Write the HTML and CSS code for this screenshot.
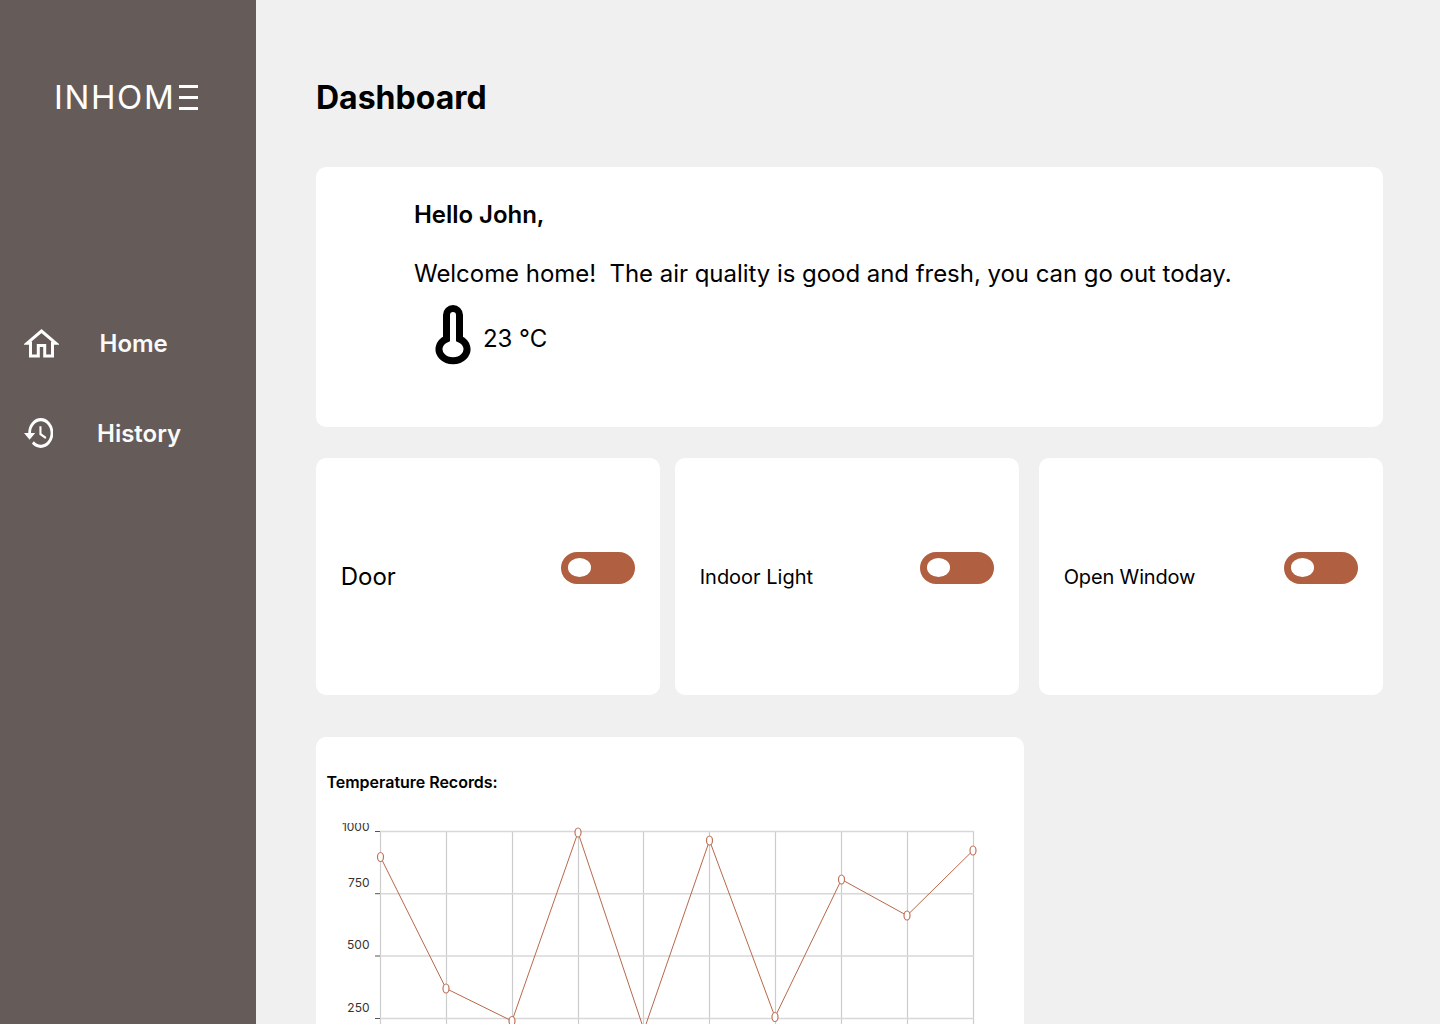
FILE: index.html
```html
<!DOCTYPE html>
<html lang="en">
<head>
<meta charset="utf-8">
<title>INHOME Dashboard</title>
<link rel="stylesheet" href="styles.css">
</head>
<body>
<div class="app">
  <aside class="sidebar">
    <div class="logo"><span class="logo-text">INHOM</span><span class="logo-e"><i></i><i></i><i></i></span></div>
    <nav class="nav">
      <a class="nav-item nav-home">
        <svg class="nav-icon-home" viewBox="24 327 35 29"><path d="M27 341.300 41.500 329 56 341.300H52.500V354H44.700V343.500H38.300V354H30.500V341.300Z" fill="none" stroke="#fff" stroke-width="3" stroke-linejoin="miter"/></svg>
        <span>Home</span>
      </a>
      <a class="nav-item nav-history">
        <svg class="nav-icon-history" viewBox="1 3 21 18" preserveAspectRatio="none"><path fill="#fff" d="M13 3a9 9 0 0 0-9 9H1l3.89 3.89.07.14L9 12H6c0-3.87 3.13-7 7-7s7 3.13 7 7-3.13 7-7 7c-1.93 0-3.68-.79-4.94-2.06l-1.42 1.42A8.954 8.954 0 0 0 13 21a9 9 0 0 0 0-18zm-1 5v5l4.28 2.54.72-1.21-3.5-2.08V8H12z"/></svg>
        <span>History</span>
      </a>
    </nav>
  </aside>
  <main class="main">
    <h1 class="title">Dashboard</h1>
    <section class="card hero">
      <p class="hello">Hello John,</p>
      <p class="welcome">Welcome home!&nbsp; The air quality is good and fresh, you can go out today.</p>
      <div class="temp">
        <svg class="thermo" viewBox="435 304 36 60"><path d="M446.500 338V314a6.500 6.500 0 0 1 13 0V338a14 11.500 0 1 1-13 0Z" fill="none" stroke="#000" stroke-width="7"/></svg>
        <span class="temp-value">23 °C</span>
      </div>
    </section>
    <section class="controls">
      <div class="card control"><span class="label-lg">Door</span><span class="switch"><i></i></span></div>
      <div class="card control"><span class="label">Indoor Light</span><span class="switch"><i></i></span></div>
      <div class="card control control-last"><span class="label label-tight">Open Window</span><span class="switch"><i></i></span></div>
    </section>
    <section class="card chart-card">
      <h2 class="chart-title">Temperature Records:</h2>
      <svg class="chart" viewBox="316 823 708 220">
        <g class="grid-v">
          <path d="M380.500 831V1040M446.500 831V1040M512.500 831V1040M578.500 831V1040M643.500 831V1040M709.500 831V1040M775.500 831V1040M841.500 831V1040M907.500 831V1040M973.500 831V1040"/>
        </g>
        <g class="grid-h">
          <path d="M380 831.500H974M380 893.700H974M380 956H974M380 1018.500H974"/>
        </g>
        <g class="ticks">
          <path d="M375 831.500H380M375 893.700H380M375 956H380M375 1018.500H380"/>
        </g>
        <g class="axis-labels">
          <text x="369.500" y="831">1000</text>
          <text x="369.500" y="887">750</text>
          <text x="369.500" y="949">500</text>
          <text x="369.500" y="1012">250</text>
        </g>
        <polyline class="line" points="380.500,857 446,988.500 512,1021 578,832.500 644,1030 709.500,840.500 775,1017 841.500,879.500 907,915.500 973,850.500"/>
        <g class="dots">
          <ellipse cx="380.500" cy="857" rx="3" ry="4.500"/>
          <ellipse cx="446" cy="988.500" rx="3" ry="4.500"/>
          <ellipse cx="512" cy="1021" rx="3" ry="4.500"/>
          <ellipse cx="578" cy="832.500" rx="3" ry="4.500"/>
          <ellipse cx="709.500" cy="840.500" rx="3" ry="4.500"/>
          <ellipse cx="775" cy="1017" rx="3" ry="4.500"/>
          <ellipse cx="841.500" cy="879.500" rx="3" ry="4.500"/>
          <ellipse cx="907" cy="915.500" rx="3" ry="4.500"/>
          <ellipse cx="973" cy="850.500" rx="3" ry="4.500"/>
        </g>
      </svg>
    </section>
  </main>
</div>
</body>
</html>
```
FILE: styles.css
```css
* { box-sizing: border-box; }
html, body { margin: 0; padding: 0; }
body { font-family: Inter, "Liberation Sans", sans-serif; background: #f0f0f0; color: #000; }
.app { display: flex; height: 1024px; overflow: hidden; }

.sidebar { flex: 0 0 256px; background: #655b58; color: #fff; padding: 80px 0 0 24px; }
.logo { display: flex; align-items: center; height: 34px; margin-left: 30px; gap: 4px; }
.logo-text { font-size: 33px; font-weight: 400; line-height: 34px; letter-spacing: 1.600px; }
.logo-e { display: flex; flex-direction: column; justify-content: space-between; width: 19px; height: 25px; }
.logo-e i { display: block; height: 3px; background: #fff; }

.nav { margin-top: 214px; display: flex; flex-direction: column; gap: 60px; }
.nav-item { display: flex; align-items: center; height: 30px; font-size: 24px; font-weight: 600; line-height: 30px; color: #fafafa; }
.nav-item span { position: relative; top: 1px; }
.nav-icon-home { width: 35px; height: 29px; margin-right: 40.500px; }
.nav-icon-history { width: 29.400px; height: 30px; margin-right: 43.600px; }

.main { flex: 1; padding: 78px 57px 0 60px; min-width: 0; }
.title { margin: 0 0 50px; font-size: 32px; font-weight: 700; line-height: 39px; }
.card { background: #fff; border-radius: 10px; }

.hero { height: 260px; padding: 33px 0 0 98px; font-size: 24px; line-height: 30px; letter-spacing: -0.04px; }
.hello { margin: 0 0 28.500px; font-weight: 600; }
.welcome { margin: 0; }
.temp { display: flex; align-items: center; margin-top: 15px; padding-left: 21px; }
.thermo { width: 36px; height: 60px; margin-top: 1px; margin-right: 12px; }
.temp-value { position: relative; top: 5px; }

.controls { display: flex; gap: 15px; margin-top: 31px; }
.control { flex: 0 0 344px; height: 237px; display: flex; align-items: flex-start; justify-content: space-between; padding: 94px 25.500px 0 24.700px; }
.control-last { margin-left: 5px; }
.label-lg { font-size: 24px; line-height: 50px; }
.label { font-size: 20px; line-height: 50px; }
.label-tight { letter-spacing: -0.15px; }
.switch { width: 74px; height: 32px; background: #b06040; border-radius: 16px; padding: 6px 7px; }
.switch i { display: block; width: 23px; height: 19px; background: #fff; border-radius: 50%; }

.chart-card { width: 708px; height: 340px; margin-top: 42px; padding-top: 35px; }
.chart-title { margin: 0 0 30px 10.500px; font-size: 16px; font-weight: 600; line-height: 21px; letter-spacing: -0.02px; }
.chart { display: block; width: 708px; height: 220px; }
.grid-v path { stroke: #ccc; stroke-width: 1.200; fill: none; }
.grid-h path { stroke: #d8d8d8; stroke-width: 1.500; fill: none; }
.ticks path { stroke: #555; stroke-width: 1; fill: none; }
.axis-labels text { font-size: 12px; fill: #333; text-anchor: end; }
.line { fill: none; stroke: #b8684a; stroke-width: 1; }
.dots ellipse { fill: #fff; stroke: #c0735a; stroke-width: 1.200; }
```
